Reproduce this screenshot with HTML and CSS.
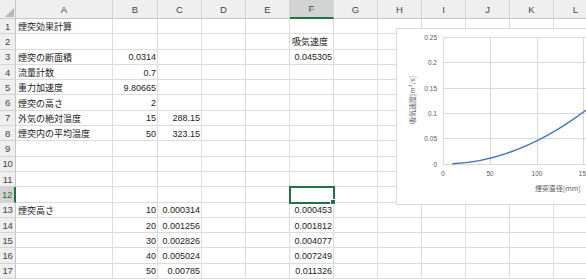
FILE: index.html
```html
<!DOCTYPE html>
<html lang="ja">
<head>
  <meta charset="UTF-8">
  <title>煙突効果計算</title>
  <link rel="stylesheet" href="styles.css">
</head>
<body>
  <div class="wrap">
    <div class="sheet">
      <!-- 列見出し -->
      <div class="corner">
        <svg width="16" height="19" viewBox="0 0 16 19"><polygon points="5,17 14,17 14,8" fill="#b8b8b8"/></svg>
      </div>
      <div class="ch">A</div><div class="ch">B</div><div class="ch">C</div><div class="ch">D</div><div class="ch">E</div><div class="ch sel">F</div>
      <div class="ch">G</div><div class="ch">H</div><div class="ch">I</div><div class="ch">J</div><div class="ch">K</div><div class="ch">L</div>

      <div class="rh">1</div><div class="c">煙突効果計算</div><div class="c"></div><div class="c"></div><div class="c"></div><div class="c"></div><div class="c"></div><div class="c"></div><div class="c"></div><div class="c"></div><div class="c"></div><div class="c"></div><div class="c"></div>
      <div class="rh">2</div><div class="c"></div><div class="c"></div><div class="c"></div><div class="c"></div><div class="c"></div><div class="c">吸気速度</div><div class="c"></div><div class="c"></div><div class="c"></div><div class="c"></div><div class="c"></div><div class="c"></div>
      <div class="rh">3</div><div class="c">煙突の断面積</div><div class="c n">0.0314</div><div class="c"></div><div class="c"></div><div class="c"></div><div class="c n">0.045305</div><div class="c"></div><div class="c"></div><div class="c"></div><div class="c"></div><div class="c"></div><div class="c"></div>
      <div class="rh">4</div><div class="c">流量計数</div><div class="c n">0.7</div><div class="c"></div><div class="c"></div><div class="c"></div><div class="c"></div><div class="c"></div><div class="c"></div><div class="c"></div><div class="c"></div><div class="c"></div><div class="c"></div>
      <div class="rh">5</div><div class="c">重力加速度</div><div class="c n">9.80665</div><div class="c"></div><div class="c"></div><div class="c"></div><div class="c"></div><div class="c"></div><div class="c"></div><div class="c"></div><div class="c"></div><div class="c"></div><div class="c"></div>
      <div class="rh">6</div><div class="c">煙突の高さ</div><div class="c n">2</div><div class="c"></div><div class="c"></div><div class="c"></div><div class="c"></div><div class="c"></div><div class="c"></div><div class="c"></div><div class="c"></div><div class="c"></div><div class="c"></div>
      <div class="rh">7</div><div class="c">外気の絶対温度</div><div class="c n">15</div><div class="c n">288.15</div><div class="c"></div><div class="c"></div><div class="c"></div><div class="c"></div><div class="c"></div><div class="c"></div><div class="c"></div><div class="c"></div><div class="c"></div>
      <div class="rh">8</div><div class="c">煙突内の平均温度</div><div class="c n">50</div><div class="c n">323.15</div><div class="c"></div><div class="c"></div><div class="c"></div><div class="c"></div><div class="c"></div><div class="c"></div><div class="c"></div><div class="c"></div><div class="c"></div>
      <div class="rh">9</div><div class="c"></div><div class="c"></div><div class="c"></div><div class="c"></div><div class="c"></div><div class="c"></div><div class="c"></div><div class="c"></div><div class="c"></div><div class="c"></div><div class="c"></div><div class="c"></div>
      <div class="rh">10</div><div class="c"></div><div class="c"></div><div class="c"></div><div class="c"></div><div class="c"></div><div class="c"></div><div class="c"></div><div class="c"></div><div class="c"></div><div class="c"></div><div class="c"></div><div class="c"></div>
      <div class="rh">11</div><div class="c"></div><div class="c"></div><div class="c"></div><div class="c"></div><div class="c"></div><div class="c"></div><div class="c"></div><div class="c"></div><div class="c"></div><div class="c"></div><div class="c"></div><div class="c"></div>
      <div class="rh sel">12</div><div class="c"></div><div class="c"></div><div class="c"></div><div class="c"></div><div class="c"></div><div class="c active"></div><div class="c"></div><div class="c"></div><div class="c"></div><div class="c"></div><div class="c"></div><div class="c"></div>
      <div class="rh">13</div><div class="c">煙突高さ</div><div class="c n">10</div><div class="c n">0.000314</div><div class="c"></div><div class="c"></div><div class="c n">0.000453</div><div class="c"></div><div class="c"></div><div class="c"></div><div class="c"></div><div class="c"></div><div class="c"></div>
      <div class="rh">14</div><div class="c"></div><div class="c n">20</div><div class="c n">0.001256</div><div class="c"></div><div class="c"></div><div class="c n">0.001812</div><div class="c"></div><div class="c"></div><div class="c"></div><div class="c"></div><div class="c"></div><div class="c"></div>
      <div class="rh">15</div><div class="c"></div><div class="c n">30</div><div class="c n">0.002826</div><div class="c"></div><div class="c"></div><div class="c n">0.004077</div><div class="c"></div><div class="c"></div><div class="c"></div><div class="c"></div><div class="c"></div><div class="c"></div>
      <div class="rh">16</div><div class="c"></div><div class="c n">40</div><div class="c n">0.005024</div><div class="c"></div><div class="c"></div><div class="c n">0.007249</div><div class="c"></div><div class="c"></div><div class="c"></div><div class="c"></div><div class="c"></div><div class="c"></div>
      <div class="rh">17</div><div class="c"></div><div class="c n">50</div><div class="c n">0.00785</div><div class="c"></div><div class="c"></div><div class="c n">0.011326</div><div class="c"></div><div class="c"></div><div class="c"></div><div class="c"></div><div class="c"></div><div class="c"></div>
    </div>

    <!-- グラフ -->
    <div class="chart">
      <svg width="200" height="177" viewBox="0 0 200 177">
        <g stroke="#d9d9d9" stroke-width="1">
          <line x1="47" y1="9.5" x2="200" y2="9.5"/>
          <line x1="47" y1="34.5" x2="200" y2="34.5"/>
          <line x1="47" y1="60.5" x2="200" y2="60.5"/>
          <line x1="47" y1="85.5" x2="200" y2="85.5"/>
          <line x1="47" y1="110.5" x2="200" y2="110.5"/>
          <line x1="47" y1="136.5" x2="200" y2="136.5"/>
          <line x1="47.5" y1="9" x2="47.5" y2="136"/>
          <line x1="94.5" y1="9" x2="94.5" y2="136"/>
          <line x1="141.5" y1="9" x2="141.5" y2="136"/>
          <line x1="187.5" y1="9" x2="187.5" y2="136"/>
        </g>
        <g class="tick" text-anchor="end">
          <text x="41" y="11.5">0.25</text>
          <text x="41" y="36.5">0.2</text>
          <text x="41" y="62.5">0.15</text>
          <text x="41" y="87.5">0.1</text>
          <text x="41" y="112.5">0.05</text>
          <text x="41" y="138.5">0</text>
        </g>
        <g class="tick" text-anchor="middle">
          <text x="47" y="148">0</text>
          <text x="94" y="148">50</text>
          <text x="141" y="148">100</text>
          <text x="188" y="148">150</text>
        </g>
        <text class="title" x="139" y="163">煙突直径[mm]</text>
        <text class="title" x="0" y="0" text-anchor="middle" transform="translate(19 72) rotate(-90)">吸気速度[m³/s]</text>
        <path d="M56.3 135.8 Q131.1 132.1 205.8 69.5" fill="none" stroke="#4472c4" stroke-width="1.5"/>
      </svg>
    </div>
  </div>
</body>
</html>
```

FILE: styles.css
```css
body {
  margin: 0;
  background: #fff;
}

.wrap {
  position: relative;
  width: 586px;
  height: 279px;
  overflow: hidden;
}

.sheet {
  display: grid;
  grid-template-columns: 16px 97px 45px 44px repeat(9, 44px);
  grid-template-rows: 19px repeat(17, 15.3px);
  font-family: "Liberation Sans", "Noto Sans CJK JP", sans-serif;
  font-size: 9px;
  color: #222;
}

.corner {
  background: #efefef;
  border-right: 1px solid #c6c6c6;
  border-bottom: 1px solid #c6c6c6;
  box-sizing: border-box;
}

.corner svg {
  display: block;
}

/* 列見出し */
.ch {
  display: flex;
  align-items: center;
  justify-content: center;
  background: #efefef;
  border-right: 1px solid #d4d4d4;
  border-bottom: 1px solid #c6c6c6;
  box-sizing: border-box;
  color: #444;
  font-size: 9.5px;
}

.ch.sel {
  background: #d3d3d3;
  border-bottom: 2px solid #217346;
  color: #1e5c37;
}

/* 行見出し */
.rh {
  display: flex;
  align-items: center;
  justify-content: center;
  background: #efefef;
  border-right: 1px solid #c6c6c6;
  border-bottom: 1px solid #d4d4d4;
  box-sizing: border-box;
  color: #444;
  font-size: 9.5px;
  white-space: nowrap;
  overflow: hidden;
  letter-spacing: -0.3px;
}

.rh.sel {
  background: #d3d3d3;
  border-right: 2px solid #217346;
  color: #217346;
}

.c {
  display: flex;
  align-items: center;
  padding: 1px 2px 0;
  border-right: 1px solid #dcdcdc;
  border-bottom: 1px solid #dcdcdc;
  box-sizing: border-box;
  white-space: nowrap;
  min-width: 0;
}

.n {
  justify-content: flex-end;
  padding-right: 1px;
}

.active {
  position: relative;
  outline: 2px solid #217346;
  outline-offset: -1px;
  z-index: 1;
}

.active::after {
  content: '';
  position: absolute;
  right: -3px;
  bottom: -3px;
  width: 4px;
  height: 4px;
  background: #217346;
  border: 1px solid #fff;
}

/* グラフ */
.chart {
  position: absolute;
  left: 396px;
  top: 28px;
  width: 200px;
  height: 177px;
  background: #fff;
  border: 1px solid #d9d9d9;
  box-sizing: border-box;
}

.chart svg {
  display: block;
  margin: -1px;
}

.tick {
  font-family: "Liberation Sans", sans-serif;
  font-size: 6.5px;
  fill: #595959;
}

.title {
  font-family: "Noto Sans CJK JP", sans-serif;
  font-size: 7px;
  fill: #595959;
}
```
